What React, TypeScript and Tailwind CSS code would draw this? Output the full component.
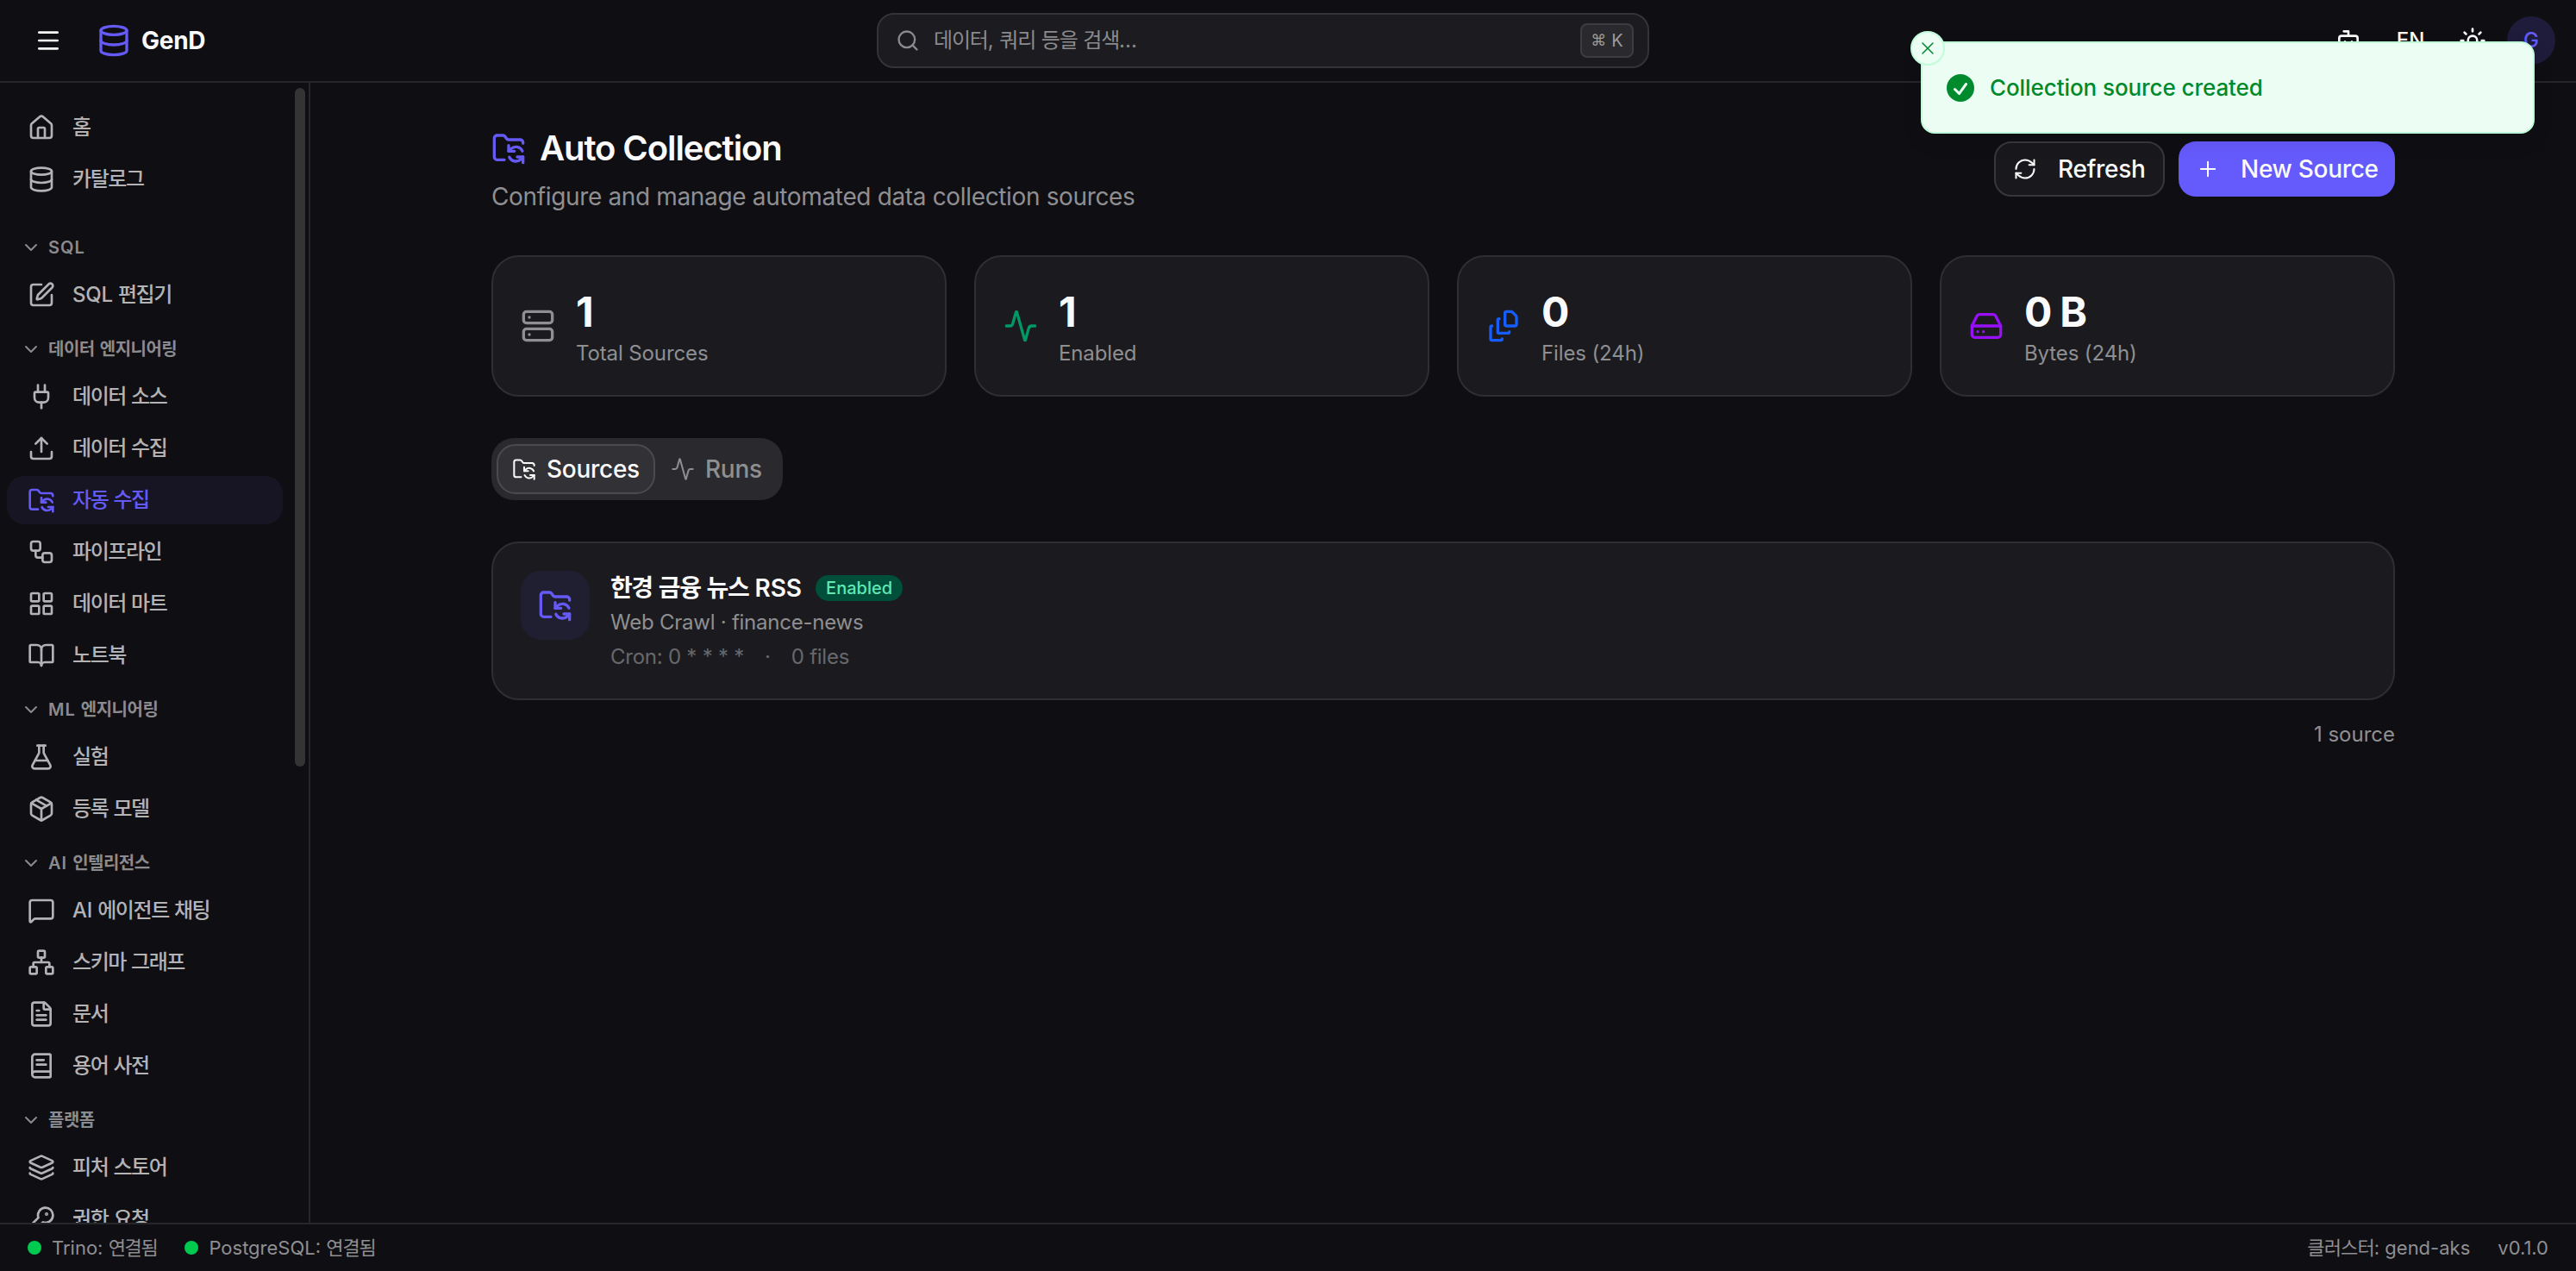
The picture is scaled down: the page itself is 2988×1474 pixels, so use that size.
import React from 'react';
import {
  Activity,
  BookOpen,
  BookText,
  Bot,
  ChevronDown,
  Database,
  FileStack,
  FileText,
  FlaskConical,
  FolderSync,
  HardDrive,
  House,
  KeyRound,
  Layers,
  LayoutGrid,
  Menu,
  MessageSquare,
  Network,
  Package,
  Plug,
  Plus,
  RefreshCw,
  Search,
  Server,
  SquarePen,
  Sun,
  Upload,
  Workflow,
  X,
  type LucideIcon,
} from 'lucide-react';

interface NavItem {
  label: string;
  icon: LucideIcon;
  active?: boolean;
}

const topItems: NavItem[] = [
  { label: '홈', icon: House },
  { label: '카탈로그', icon: Database },
];

const sections: { title: string; items: NavItem[] }[] = [
  { title: 'SQL', items: [{ label: 'SQL 편집기', icon: SquarePen }] },
  {
    title: '데이터 엔지니어링',
    items: [
      { label: '데이터 소스', icon: Plug },
      { label: '데이터 수집', icon: Upload },
      { label: '자동 수집', icon: FolderSync, active: true },
      { label: '파이프라인', icon: Workflow },
      { label: '데이터 마트', icon: LayoutGrid },
      { label: '노트북', icon: BookOpen },
    ],
  },
  {
    title: 'ML 엔지니어링',
    items: [
      { label: '실험', icon: FlaskConical },
      { label: '등록 모델', icon: Package },
    ],
  },
  {
    title: 'AI 인텔리전스',
    items: [
      { label: 'AI 에이전트 채팅', icon: MessageSquare },
      { label: '스키마 그래프', icon: Network },
      { label: '문서', icon: FileText },
      { label: '용어 사전', icon: BookText },
    ],
  },
  {
    title: '플랫폼',
    items: [
      { label: '피처 스토어', icon: Layers },
      { label: '권한 요청', icon: KeyRound },
    ],
  },
];

const stats = [
  { label: 'Total Sources', value: '1', icon: Server, color: 'text-[#8f8f92]' },
  { label: 'Enabled', value: '1', icon: Activity, color: 'text-emerald-600' },
  { label: 'Files (24h)', value: '0', icon: FileStack, color: 'text-blue-600' },
  { label: 'Bytes (24h)', value: '0 B', icon: HardDrive, color: 'text-purple-600' },
];

// Hangul glyphs are set a little tighter than the Latin ones
const Mixed: React.FC<{ text: string; tracking?: string }> = ({
  text,
  tracking = 'tracking-[-0.06em]',
}) => (
  <span className="whitespace-pre">
    {text.split(/([가-힣]+)/).map((part, i) =>
      i % 2 === 1 ? (
        <span key={i} className={tracking}>{part}</span>
      ) : (
        part
      )
    )}
  </span>
);

const NavLink: React.FC<{ item: NavItem }> = ({ item }) => {
  const Icon = item.icon;
  return (
    <a
      className={`flex h-14 shrink-0 items-center gap-5 rounded-[20px] px-6 text-2xl font-medium tracking-[-0.01em] ${
        item.active ? 'bg-[#171524] text-[#655af5]' : 'text-[#b3b3b6]'
      }`}
    >
      <Icon className="h-8 w-8 shrink-0" />
      <Mixed text={item.label} />
    </a>
  );
};

const Sidebar: React.FC = () => (
  <aside className="relative w-[360px] shrink-0 overflow-hidden border-r-2 border-[#27272b]">
    <nav className="flex w-[336px] flex-col px-2 pt-6">
      <div className="mb-4 flex flex-col gap-1">
        {topItems.map((item) => (
          <NavLink key={item.label} item={item} />
        ))}
      </div>
      {sections.map((section) => (
        <div key={section.title}>
          <div className="mt-2 flex h-[54px] items-center gap-2 pl-4 text-xl font-semibold tracking-wider text-[#8b8b8e]">
            <ChevronDown className="h-6 w-6" />
            <Mixed text={section.title} tracking="tracking-[-0.025em]" />
          </div>
          <div className="flex flex-col gap-1">
            {section.items.map((item) => (
              <NavLink key={item.label} item={item} />
            ))}
          </div>
        </div>
      ))}
    </nav>
    {/* Scrollbar thumb */}
    <div className="absolute top-1.5 right-1 h-[787px] w-3 rounded-full bg-[#343435]" />
  </aside>
);

const Header: React.FC = () => (
  <header className="grid h-24 shrink-0 grid-cols-[1017px_896px_1fr] items-center border-b-2 border-[#27272b]">
    <div className="flex items-center pl-10">
      <Menu className="h-8 w-8" />
      <Database className="ml-10 h-10 w-10 text-[#655af5]" />
      <span className="ml-3 text-[28px] font-bold tracking-[-0.01em]">GenD</span>
    </div>
    <div className="flex h-16 items-center rounded-[20px] border-2 border-[#343438] bg-[#1c1c20] pr-4 pl-5 text-[#8b8b8e]">
      <Search className="h-7 w-7" />
      <span className="ml-4 flex-1 text-2xl">
        <Mixed text="데이터, 쿼리 등을 검색..." tracking="tracking-[-0.05em]" />
      </span>
      <kbd className="flex h-10 w-[62px] items-center justify-center gap-1.5 rounded-lg border-2 border-[#3d3d41] bg-[#2a2a2e] font-['Inter'] text-xl text-[#9b9b9f]">
        <span className="font-['DejaVu_Sans'] text-lg">⌘</span>
        <span>K</span>
      </kbd>
    </div>
    <div className="flex items-center justify-end gap-2 pr-6">
      <button className="flex h-16 w-16 items-center justify-center">
        <Bot className="h-8 w-8" />
      </button>
      <button className="flex h-16 w-16 items-center justify-center text-2xl font-medium">EN</button>
      <button className="flex h-16 w-16 items-center justify-center">
        <Sun className="h-8 w-8" />
      </button>
      <div className="flex h-14 w-14 items-center justify-center rounded-full bg-[#1f1c3b] text-2xl font-medium text-[#655af5]">
        G
      </div>
    </div>
  </header>
);

const Toast: React.FC = () => (
  <div className="absolute top-12 right-12 flex h-[107px] w-[712px] items-center gap-3.5 rounded-2xl border-2 border-[#bffcd9] bg-[#ecfdf3] px-6 text-[#008a2e] shadow-[0_8px_24px_rgba(0,0,0,0.1)]">
    <button className="absolute -top-3.5 -left-3.5 flex h-10 w-10 items-center justify-center rounded-full border-2 border-[#bffcd9] bg-[#ecfdf3]">
      <X className="h-6 w-6" strokeWidth={1.5} />
    </button>
    <svg viewBox="0 0 20 20" fill="currentColor" className="h-10 w-10">
      <path
        fillRule="evenodd"
        clipRule="evenodd"
        d="M10 18a8 8 0 100-16 8 8 0 000 16zm3.857-9.809a.75.75 0 00-1.214-.882l-3.483 4.79-1.88-1.88a.75.75 0 10-1.06 1.061l2.5 2.5a.75.75 0 001.137-.089l4-5.5z"
      />
    </svg>
    <span className="text-[26px] font-medium tracking-[-0.003em]">Collection source created</span>
  </div>
);

export default function App() {
  return (
    <div className="relative flex h-[1474px] w-[2988px] flex-col overflow-hidden bg-[#0f0e13] font-['Inter','Noto_Sans_CJK_KR',sans-serif] text-[#fafafa]">
      <Header />

      <div className="flex min-h-0 flex-1">
        <Sidebar />

        <main className="flex-1">
          <div className="mx-auto flex w-[2208px] flex-col gap-12 pt-12">
            {/* Page title */}
            <div className="flex items-center justify-between">
              <div className="flex flex-col gap-2">
                <h1 className="flex h-14 items-center gap-4 text-[40px] font-semibold tracking-[-0.027em]">
                  <FolderSync className="h-10 w-10 text-[#655af5]" />
                  Auto Collection
                </h1>
                <p className="text-[28px] leading-10 tracking-[-0.0125em] text-[#8f8f92]">
                  Configure and manage automated data collection sources
                </p>
              </div>
              <div className="flex gap-4 text-[28px] font-medium tracking-[-0.01em]">
                <button className="flex h-16 w-[198px] items-center gap-6 rounded-[20px] border-2 border-[#38383c] bg-[#19191d] px-5">
                  <RefreshCw className="h-7 w-7 shrink-0" strokeWidth={1.75} />
                  Refresh
                </button>
                <button className="flex h-16 w-[251px] items-center gap-6 rounded-[20px] bg-[#655afb] px-5 whitespace-nowrap">
                  <Plus className="h-7 w-7 shrink-0" strokeWidth={1.75} />
                  New Source
                </button>
              </div>
            </div>

            {/* Stats */}
            <div className="grid grid-cols-4 gap-8">
              {stats.map((stat) => (
                <div
                  key={stat.label}
                  className="flex items-center gap-6 rounded-[32px] border-2 border-[#2f2f33] bg-[#1b1b1f] p-8"
                >
                  <stat.icon className={`h-10 w-10 ${stat.color}`} />
                  <div>
                    <p className="text-5xl leading-[64px] font-bold tracking-tight">{stat.value}</p>
                    <p className="text-2xl tracking-[-0.005em] text-[#8f8f92]">{stat.label}</p>
                  </div>
                </div>
              ))}
            </div>

            {/* Tabs */}
            <div className="flex h-[72px] items-center self-start rounded-[26px] bg-[#2a2a2e] p-1.5 text-[28px] font-medium tracking-[-0.01em]">
              <button className="flex h-[58px] w-[184px] items-center gap-3 rounded-[22px] border-2 border-[#4b4b4f] bg-[#323236] px-4">
                <FolderSync className="h-7 w-7 shrink-0" strokeWidth={1.75} />
                Sources
              </button>
              <button className="flex h-[58px] w-[142px] items-center gap-3 px-[18px] text-[#8f8f92]">
                <Activity className="h-7 w-7 shrink-0" strokeWidth={1.75} />
                Runs
              </button>
            </div>

            {/* Source list */}
            <div className="flex flex-col gap-6">
              <div className="flex gap-6 rounded-[32px] border-2 border-[#2f2f33] bg-[#1b1b1f] p-8">
                <div className="flex h-20 w-20 items-center justify-center rounded-3xl bg-[#201e31] text-[#655af5]">
                  <FolderSync className="h-10 w-10" />
                </div>
                <div>
                  <div className="flex h-10 items-center gap-4">
                    <h3 className="text-[28px] font-semibold">
                      <Mixed text="한경 금융 뉴스 RSS" tracking="tracking-[-0.05em]" />
                    </h3>
                    <span className="flex h-[30px] items-center rounded-full bg-[#004f3b] px-3 text-xl font-medium text-emerald-300">
                      Enabled
                    </span>
                  </div>
                  <p className="mt-1 text-2xl tracking-[-0.01em] text-[#8f8f92]">Web Crawl · finance-news</p>
                  <div className="mt-2 flex gap-6 text-2xl tracking-[-0.01em] text-[#68686c]">
                    <span>Cron: 0 * * * *</span>
                    <span>·</span>
                    <span>0 files</span>
                  </div>
                </div>
              </div>
              <p className="text-right text-2xl text-[#8f8f92]">1 source</p>
            </div>
          </div>
        </main>
      </div>

      <footer className="flex h-14 shrink-0 items-center gap-8 border-t-2 border-[#27272b] px-8 text-[22px] text-[#8f8f92]">
        <div className="flex items-center gap-3">
          <span className="h-4 w-4 rounded-full bg-[#00c950]" />
          <Mixed text="Trino: 연결됨" />
        </div>
        <div className="flex flex-1 items-center gap-3">
          <span className="h-4 w-4 rounded-full bg-[#00c950]" />
          <Mixed text="PostgreSQL: 연결됨" tracking="tracking-[-0.05em]" />
        </div>
        <Mixed text="클러스터: gend-aks" tracking="tracking-[-0.04em]" />
        <span>v0.1.0</span>
      </footer>

      <Toast />
    </div>
  );
}
